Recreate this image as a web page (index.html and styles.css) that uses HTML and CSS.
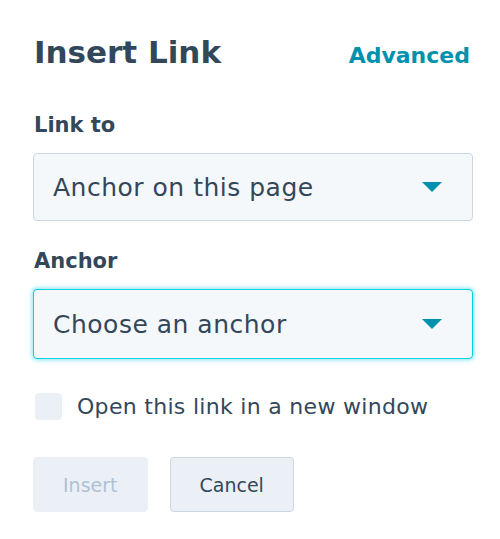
FILE: index.html
```html
<!DOCTYPE html>
<html lang="en">
<head>
  <meta charset="UTF-8"/>
  <title>Insert Link</title>
  <link rel="stylesheet" href="styles.css">
</head>
<body>
  <div class="dialog">
    <div class="header">
      <h2>Insert Link</h2>
      <a class="advanced" href="#">Advanced</a>
    </div>

    <label class="field-label">Link to</label>
    <div class="select">
      <span>Anchor on this page</span>
      <span class="caret"></span>
    </div>

    <label class="field-label">Anchor</label>
    <div class="select focused">
      <span>Choose an anchor</span>
      <span class="caret"></span>
    </div>

    <div class="check-row">
      <span class="checkbox"></span>
      <span>Open this link in a new window</span>
    </div>

    <div class="actions">
      <button class="btn disabled">Insert</button>
      <button class="btn">Cancel</button>
    </div>
  </div>
</body>
</html>
```

FILE: styles.css
```css
* { box-sizing: border-box; margin: 0; padding: 0; }

body {
  font-family: "DejaVu Sans", sans-serif;
  color: #33475b;
  background: #fff;
}

.dialog {
  width: 440px;
  margin-left: 33px;
  padding-top: 30px;
}

.header {
  display: flex;
  justify-content: space-between;
  align-items: baseline;
  padding-left: 1px;
}

h2 {
  font-size: 31px;
  font-weight: bold;
  line-height: 44px;
}

.advanced {
  font-size: 22px;
  font-weight: bold;
  color: #0091ae;
  text-decoration: none;
  margin-right: 3px;
}

.field-label {
  display: block;
  font-size: 21px;
  font-weight: bold;
  line-height: 28px;
  padding-left: 1px;
  margin-top: 37px;
  margin-bottom: 14px;
}

.select {
  display: flex;
  justify-content: space-between;
  align-items: center;
  height: 68px;
  padding: 0 30px 0 19px;
  background: #f5f8fa;
  border: 1px solid #cbd6e2;
  border-radius: 4px;
  font-size: 25px;
  letter-spacing: 0.5px;
}

.select + .field-label { margin-top: 26px; }

.select.focused {
  border: 1px solid #00d0e4;
  box-shadow: 0 0 4px 1px rgba(0, 208, 228, 0.5);
  height: 70px;
}

.caret {
  width: 0;
  height: 0;
  border-left: 10px solid transparent;
  border-right: 10px solid transparent;
  border-top: 10px solid #0091ae;
}

.check-row {
  display: flex;
  align-items: center;
  gap: 15px;
  margin-top: 34px;
  padding-left: 2px;
  font-size: 22px;
  letter-spacing: 0.3px;
}

.checkbox {
  width: 27px;
  height: 27px;
  background: #eaf0f6;
  border-radius: 4px;
}

.actions {
  display: flex;
  gap: 22px;
  margin-top: 37px;
}

.btn {
  height: 55px;
  padding: 0 29px;
  font-family: inherit;
  font-size: 19px;
  color: #33475b;
  background: #eaf0f6;
  border: 1px solid #cbd6e2;
  border-radius: 4px;
}

.btn.disabled {
  color: #b0c1d4;
  border-color: #eaf0f6;
}
```
